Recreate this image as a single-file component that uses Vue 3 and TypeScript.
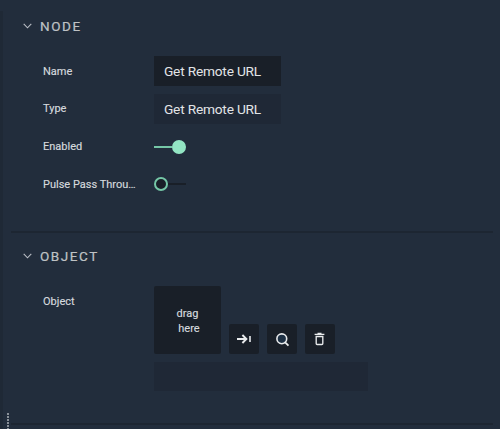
<script setup lang="ts">
import { ref } from 'vue'

const nodeName = ref('Get Remote URL')
const nodeType = 'Get Remote URL'
const enabled = ref(true)
const passThrough = ref(false)
</script>

<template>
  <main class="panel">
    <div class="rail"></div>
    <div class="content">
      <section class="section node">
        <h2 class="heading">
          <svg class="chevron" width="9" height="6" viewBox="0 0 9 6"><path d="M.7.9 4.5 4.8 8.3.9" /></svg>
          <span>NODE</span>
        </h2>
        <div class="rows">
          <div class="row">
            <span class="label">Name</span>
            <div class="field">{{ nodeName }}</div>
          </div>
          <div class="row">
            <span class="label">Type</span>
            <div class="field readonly">{{ nodeType }}</div>
          </div>
          <div class="row">
            <span class="label">Enabled</span>
            <div class="toggle" :class="{ on: enabled }" @click="enabled = !enabled"><i class="track"></i><i class="knob"></i></div>
          </div>
          <div class="row">
            <span class="label">Pulse Pass Throu…</span>
            <div class="toggle" :class="{ on: passThrough }" @click="passThrough = !passThrough"><i class="track"></i><i class="knob"></i></div>
          </div>
        </div>
      </section>
      <section class="section object">
        <h2 class="heading">
          <svg class="chevron" width="9" height="6" viewBox="0 0 9 6"><path d="M.7.9 4.5 4.8 8.3.9" /></svg>
          <span>OBJECT</span>
        </h2>
        <div class="object-row">
          <span class="label">Object</span>
          <div>
            <div class="picker">
              <div class="drop"><span>drag</span><span class="second">here</span></div>
              <button class="btn" aria-label="Go to">
                <svg width="30" height="30" viewBox="0 0 30 30"><path d="M8 15h9M13.4 11l4 4-4 4" stroke-width="1.9" /><path d="M21 12v6" stroke-width="1.6" /></svg>
              </button>
              <button class="btn" aria-label="Search">
                <svg width="30" height="30" viewBox="0 0 30 30"><circle cx="14.8" cy="14.8" r="4.9" fill="#1d3044" stroke-width="1.6" /><path d="m17.6 17.8 3.9 3.9" stroke-width="1.8" /></svg>
              </button>
              <button class="btn" aria-label="Delete">
                <svg width="30" height="30" viewBox="0 0 30 30"><path d="M9.6 10.3h9.8M12.5 9.4h4" stroke-width="1.2" /><path d="M11.2 12.5h6.6v7.1q0 .9-.9.9h-4.8q-.9 0-.9-.9z" stroke-width="1.35" /></svg>
              </button>
            </div>
            <div class="path"></div>
          </div>
        </div>
      </section>
    </div>
    <div class="handle"></div>
  </main>
</template>

<style>
body {
  margin: 0;
  background: #222d3c;
}
</style>

<style scoped>
.panel {
  position: relative;
  display: flex;
  box-sizing: border-box;
  width: 500px;
  height: 429px;
  padding-top: 11px;
  overflow: hidden;
  background: #222d3c;
  color: #d5d9de;
  font-family: Roboto, "Liberation Sans", sans-serif;
}
.rail {
  width: 3px;
  background: #1f2936;
}
.content {
  width: 482px;
  margin-left: 8px;
}
.section {
  box-sizing: border-box;
  border-bottom: 2px solid #1d2632;
}
.node {
  height: 222px;
}
.object {
  height: 192px;
  padding-top: 8px;
}
.heading {
  display: flex;
  align-items: center;
  gap: 8px;
  height: 30px;
  margin: 0;
  padding-left: 12px;
  color: #bfc2c5;
  font-size: 13.5px;
  font-weight: 400;
  letter-spacing: 1.55px;
  -webkit-text-stroke: 0.2px #bfc2c5;
}
.chevron {
  fill: none;
  stroke: #b9bec5;
  stroke-width: 1.1;
}
.rows {
  display: grid;
  gap: 7.8px;
  padding: 15px 0 0 32px;
}
.row {
  display: flex;
  align-items: center;
  height: 30px;
}
.label {
  flex: none;
  width: 97px;
  margin-right: 14px;
  white-space: nowrap;
  font-size: 11px;
  -webkit-text-stroke: 0.15px #d5d9de;
}
.field {
  box-sizing: border-box;
  width: 127px;
  height: 30px;
  padding-left: 10px;
  background: #191f28;
  color: #e2e4e7;
  font-size: 13.7px;
  letter-spacing: -0.2px;
  line-height: 31px;
  white-space: nowrap;
}
.readonly {
  background: #1f2836;
}
.toggle {
  display: flex;
  align-items: center;
  width: 32px;
}
.track {
  flex: 1;
  order: 2;
  height: 2px;
  background: #191f28;
}
.knob {
  box-sizing: border-box;
  order: 1;
  width: 14px;
  height: 14px;
  border: 2px solid #75c7a7;
  border-radius: 50%;
  background: #191f28;
}
.on .track {
  order: 0;
  background: #75c7a7;
}
.on .knob {
  border-color: #93e5c4;
  background: #93e5c4;
}
.object-row {
  display: flex;
  padding: 15px 0 0 32px;
}
.object-row .label {
  height: 32px;
  line-height: 32px;
}
.picker {
  display: flex;
  align-items: flex-end;
  gap: 8px;
}
.drop {
  box-sizing: border-box;
  display: flex;
  flex-direction: column;
  align-items: center;
  justify-content: center;
  width: 67px;
  height: 68px;
  padding-top: 2px;
  border-radius: 2px;
  background: #191f28;
  font-size: 11px;
  line-height: 15px;
  -webkit-text-stroke: 0.15px #d5d9de;
}
.second {
  padding-left: 3px;
}
.btn {
  width: 30px;
  height: 30px;
  padding: 0;
  border: 0;
  border-radius: 2px;
  background: #191f28;
}
.btn svg {
  display: block;
  fill: none;
  stroke: #e8eaec;
}
.path {
  width: 214px;
  height: 29px;
  margin-top: 8px;
  background: #1f2836;
}
.handle {
  position: absolute;
  left: 7px;
  bottom: 0;
  width: 2px;
  height: 16px;
  background: repeating-linear-gradient(#8a9199 0 2px, transparent 2px 3px);
}
</style>
